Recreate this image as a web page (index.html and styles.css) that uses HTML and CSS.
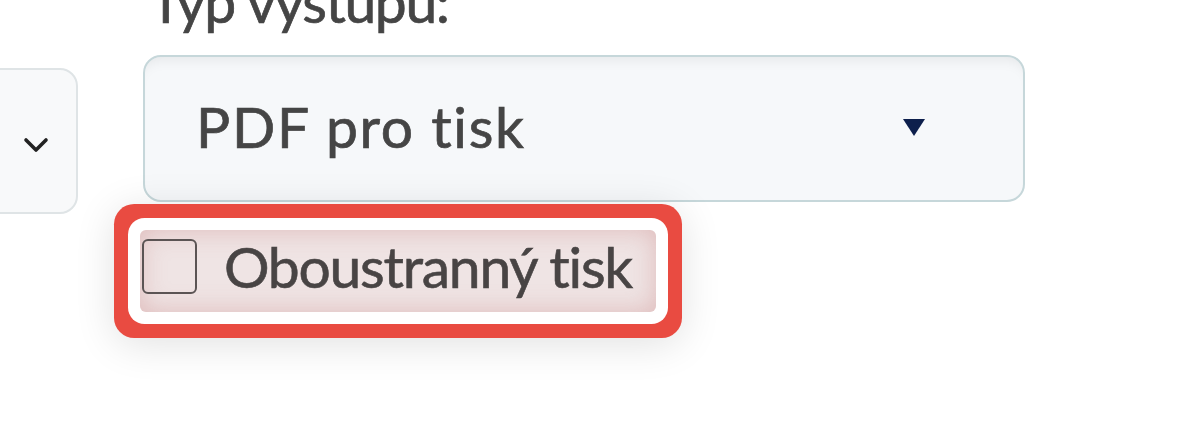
FILE: index.html
```html
<!DOCTYPE html>
<html lang="cs">
<head>
<meta charset="utf-8">
<title>Typ výstupu</title>
<link rel="stylesheet" href="styles.css">
</head>
<body>
<div class="page">
  <div class="side-select">
    <svg class="chevron" width="26" height="16" viewBox="0 0 26 16"><polyline points="3,3 13,13 23,3" fill="none" stroke="#222" stroke-width="3.6" stroke-linecap="round" stroke-linejoin="round"/></svg>
  </div>
  <div class="field">
    <div class="field-label">Typ výstupu:</div>
    <div class="select">
      <span class="select-value">PDF pro tisk</span>
      <svg class="caret" width="22" height="17" viewBox="0 0 22 17"><polygon points="0,0 22,0 11,17" fill="#0d1f4c"/></svg>
    </div>
    <label class="check">
      <span class="check-box"></span>
      <span class="check-text">Oboustranný tisk</span>
    </label>
  </div>
</div>
</body>
</html>
```
FILE: styles.css
```css
html, body {
  margin: 0;
  padding: 0;
  background: #fff;
  overflow: hidden;
}
body {
  width: 1200px;
  height: 446px;
  font-family: Lato, "Noto Sans", sans-serif;
  color: #454545;
}
.page {
  display: flex;
  align-items: flex-start;
  gap: 65px;
}
.side-select {
  box-sizing: border-box;
  width: 120px;
  height: 146px;
  margin-left: -42px;
  margin-top: 68px;
  background: #f8f9fa;
  border: 2px solid #dfe4e6;
  border-radius: 18px;
  display: flex;
  align-items: center;
  justify-content: flex-end;
  padding-right: 27px;
  padding-top: 8px;
}
.chevron { display: block; }
.field {
  display: flex;
  flex-direction: column;
  align-items: flex-start;
}
.field-label {
  font-size: 57px;
  line-height: 65px;
  margin-top: -31px;
  padding-left: 6px;
  letter-spacing: -1.4px;
  white-space: nowrap;
  -webkit-text-stroke: 0.7px #454545;
}
.select {
  box-sizing: border-box;
  margin-top: 21px;
  width: 882px;
  height: 147px;
  border: 2px solid #c6d7da;
  border-radius: 18px;
  background: #f6f8fa;
  box-shadow: inset 0 12px 14px -10px rgba(0, 0, 0, 0.08);
  display: flex;
  align-items: center;
  justify-content: space-between;
  padding: 0 98px 0 51px;
}
.select-value {
  font-size: 57px;
  line-height: 1;
  letter-spacing: 1.7px;
  white-space: nowrap;
  -webkit-text-stroke: 0.7px #454545;
  margin-top: -4px;
}
.caret { display: block; margin-top: -2px; }
.check {
  box-sizing: border-box;
  margin-top: 28px;
  margin-left: -3px;
  width: 516px;
  height: 82px;
  display: flex;
  align-items: center;
  gap: 27px;
  padding-left: 2px;
  padding-bottom: 10px;
  border-radius: 6px;
  background: #efe4e4;
  box-shadow:
    inset 0 0 26px rgba(196, 120, 120, 0.38),
    0 0 0 12px #fff,
    0 0 0 26px #e94b41,
    0 6px 40px 26px rgba(0, 0, 0, 0.12);
  position: relative;
}
.check-box {
  box-sizing: border-box;
  width: 55px;
  height: 55px;
  border: 2.5px solid #5b5454;
  border-radius: 6px;
  flex: none;
}
.check-text {
  font-size: 57px;
  line-height: 1;
  color: #484444;
  letter-spacing: -1.25px;
  white-space: nowrap;
  -webkit-text-stroke: 0.6px #484444;
}
```
